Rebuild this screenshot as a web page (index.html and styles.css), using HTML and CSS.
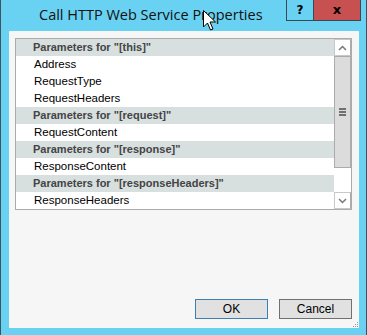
FILE: index.html
```html
<!DOCTYPE html>
<html lang="en">
<head>
  <meta charset="UTF-8">
  <title>Call HTTP Web Service Properties</title>
  <link rel="stylesheet" href="styles.css">
</head>
<body>
  <div class="window">
    <!-- Title bar -->
    <div class="titlebar">
      <div class="title">Call HTTP Web Service Properties</div>
      <div class="caption-btn help">?</div>
      <div class="caption-btn close">x</div>
    </div>

    <!-- Mouse pointer over the title -->
    <svg class="cursor" width="13" height="21" viewBox="0 0 13 21">
      <path d="M0.5 0.5 L0.5 17 L4.5 13 L7.5 20 L10 19 L7 12 L12.5 12 Z" fill="#fff" stroke="#000" stroke-width="1"/>
    </svg>

    <div class="client">
      <div class="listbox">
        <div class="rows">
          <div class="row group">Parameters for "[this]"</div>
          <div class="row">Address</div>
          <div class="row">RequestType</div>
          <div class="row">RequestHeaders</div>
          <div class="row group">Parameters for "[request]"</div>
          <div class="row">RequestContent</div>
          <div class="row group">Parameters for "[response]"</div>
          <div class="row">ResponseContent</div>
          <div class="row group">Parameters for "[responseHeaders]"</div>
          <div class="row">ResponseHeaders</div>
        </div>
        <div class="scrollbar">
          <div class="sb-btn">
            <svg width="9" height="6" viewBox="0 0 9 6"><path d="M1 5 L4.5 1.5 L8 5" fill="none" stroke="#777" stroke-width="1.5"/></svg>
          </div>
          <div class="sb-thumb">
            <div class="grip"></div>
          </div>
          <div class="sb-track"></div>
          <div class="sb-btn">
            <svg width="9" height="6" viewBox="0 0 9 6"><path d="M1 1 L4.5 4.5 L8 1" fill="none" stroke="#777" stroke-width="1.5"/></svg>
          </div>
        </div>
      </div>

      <div class="footer">
        <button class="button default">OK</button>
        <button class="button">Cancel</button>
      </div>

      <svg class="resize-grip" width="7" height="7" viewBox="0 0 7 7">
        <rect x="5" y="1" width="1" height="1" fill="#999"/>
        <rect x="3" y="3" width="1" height="1" fill="#999"/>
        <rect x="5" y="3" width="1" height="1" fill="#999"/>
        <rect x="1" y="5" width="1" height="1" fill="#999"/>
        <rect x="3" y="5" width="1" height="1" fill="#999"/>
        <rect x="5" y="5" width="1" height="1" fill="#999"/>
      </svg>
    </div>
  </div>
</body>
</html>
```

FILE: styles.css
```css
body {
  margin: 0;
  padding: 0;
  font-family: "Liberation Sans", Arial, sans-serif;
}

.window {
  position: relative;
  width: 367px;
  height: 335px;
  box-sizing: border-box;
  background-color: #69d1f1;
  border-left: 1px solid #3a5560;
  border-right: 1px solid #3a5560;
  display: flex;
  flex-direction: column;
}

.titlebar {
  height: 31px;
  display: flex;
  align-items: flex-start;
  padding-right: 5px;
}

.title {
  flex: 1;
  padding-left: 38px;
  padding-top: 5px;
  font-family: "Open Sans", sans-serif;
  font-size: 14.5px;
  color: #111;
}

.caption-btn {
  height: 20px;
  border: 1px solid #3a4a50;
  border-top: none;
  font-family: "DejaVu Sans", sans-serif;
  font-weight: bold;
  font-size: 12px;
  text-align: center;
  line-height: 20px;
  color: #000;
}

.help {
  width: 26px;
  border-right: none;
}

.close {
  width: 46px;
  background-color: #c75050;
  font-size: 13px;
}

.cursor {
  position: absolute;
  left: 202px;
  top: 10px;
}

.client {
  position: relative;
  flex: 1;
  margin: 0 7px 7px 8px;
  background-color: #f6f6f6;
  padding: 7px 7px 9px 6px;
  display: flex;
  flex-direction: column;
}

.listbox {
  height: 170px;
  border: 1px solid #ababab;
  background-color: #fff;
  display: flex;
}

.rows {
  flex: 1;
}

.row {
  height: 17px;
  line-height: 17px;
  padding-left: 18px;
  font-size: 11.5px;
  color: #000;
}

.row.group {
  background-color: #d7dfdf;
  font-weight: bold;
  font-size: 11px;
  color: #444;
  padding-left: 17px;
}

.scrollbar {
  width: 17px;
  display: flex;
  flex-direction: column;
  background-color: #fff;
}

.sb-btn {
  height: 17px;
  box-sizing: border-box;
  border: 1px solid #c8c8c8;
  border-right-color: #ababab;
  display: flex;
  align-items: center;
  justify-content: center;
}

.sb-thumb {
  height: 112px;
  box-sizing: border-box;
  background-color: #dcdcdc;
  border: 1px solid #ababab;
  display: flex;
  align-items: center;
  justify-content: center;
}

.grip {
  width: 7px;
  height: 2px;
  background-color: #707070;
  box-shadow: 0 -3px 0 #707070, 0 3px 0 #707070;
}

.sb-track {
  flex: 1;
}

.footer {
  margin-top: auto;
  display: flex;
  justify-content: flex-end;
  gap: 11px;
}

.button {
  width: 73px;
  height: 20px;
  padding: 0;
  background-color: #e1e1e1;
  border: 1px solid #707070;
  font-family: "Liberation Sans", Arial, sans-serif;
  font-size: 12px;
  color: #000;
}

.button.default {
  border-color: #3c7fb1;
}

.resize-grip {
  position: absolute;
  right: 0;
  bottom: 0;
}
```
